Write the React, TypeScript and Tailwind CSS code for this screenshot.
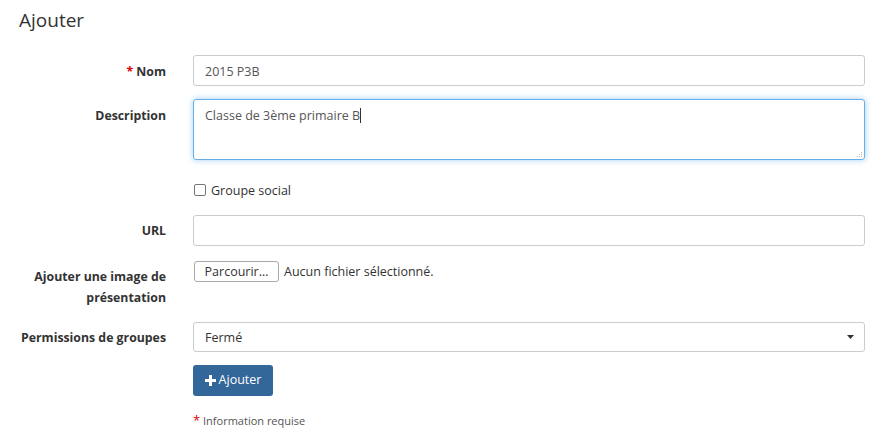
import React from "react";

const Label = ({ children, className = "" }: { children: React.ReactNode; className?: string }) => (
  <div className={`w-[147px] shrink-0 text-right font-bold text-[12.3px] text-[#333] ${className}`}>{children}</div>
);

export default function App() {
  return (
    <div className="w-[891px] h-[445px] bg-white px-[19px] text-[#333]" style={{ fontFamily: '"Open Sans", sans-serif' }}>
      <h1 className="pt-[8px] text-[19px] leading-[24px] font-normal text-[#333]">Ajouter</h1>

      <div className="mt-[23px] flex items-start">
        <Label className="pt-[8px] leading-[17px]"><span className="text-[#d00]">*</span> Nom</Label>
        <div className="ml-[27px] w-[672px] h-[31px] border border-[#ccc] rounded-[3px] px-[11px] pt-[7px] text-[12.5px] leading-[17px] text-[#555]">2015 P3B</div>
      </div>

      <div className="mt-[13px] flex items-start">
        <Label className="pt-[8px] leading-[17px]">Description</Label>
        <div className="ml-[27px] w-[672px] h-[61px] border border-[#66afe9] rounded-[3px] px-[11px] pt-[7px] text-[12.5px] leading-[17px] text-[#555] shadow-[0_0_6px_rgba(102,175,233,0.6)] relative">
          Classe de 3ème primaire B<span className="inline-block w-px h-[15px] bg-[#333] align-[-3px]"></span>
          <svg className="absolute right-[1px] bottom-[1px]" width="7" height="7" viewBox="0 0 7 7">
            <rect x="5" y="1" width="1" height="1" fill="#bbb" />
            <rect x="3" y="3" width="1" height="1" fill="#bbb" />
            <rect x="5" y="3" width="1" height="1" fill="#bbb" />
            <rect x="1" y="5" width="1" height="1" fill="#bbb" />
            <rect x="3" y="5" width="1" height="1" fill="#bbb" />
            <rect x="5" y="5" width="1" height="1" fill="#bbb" />
          </svg>
        </div>
      </div>

      <div className="mt-[20px] flex items-center">
        <div className="w-[147px] shrink-0" />
        <div className="ml-[27px] flex items-center h-[20px]">
          <span className="w-[12px] h-[12px] border border-[#767676] rounded-[2px] bg-white ml-[1px]" />
          <span className="ml-[5px] text-[12.5px] leading-[17px]">Groupe social</span>
        </div>
      </div>

      <div className="mt-[15px] flex items-start">
        <Label className="pt-[7px] leading-[17px]">URL</Label>
        <div className="ml-[27px] w-[672px] h-[31px] border border-[#ccc] rounded-[3px]" />
      </div>

      <div className="mt-[15px] flex items-start">
        <Label className="pt-[5px] leading-[21px]">Ajouter une image de présentation</Label>
        <div className="ml-[27px] flex items-center pt-[0px]">
          <div className="ml-[1px] h-[21px] w-[85px] border border-[#aaa] rounded-[3px] bg-white text-[12.5px] leading-[19px] text-center text-[#333]">Parcourir…</div>
          <span className="ml-[5px] text-[12.5px] leading-[17px]">Aucun fichier sélectionné.</span>
        </div>
      </div>

      <div className="mt-[14px] flex items-start">
        <Label className="pt-[7px] leading-[17px]">Permissions de groupes</Label>
        <div className="ml-[27px] w-[672px] h-[30px] border border-[#ccc] rounded-[3px] px-[11px] py-[6px] text-[12.5px] leading-[17px] text-[#333] flex items-center justify-between">
          <span>Fermé</span>
          <svg width="7" height="4" viewBox="0 0 7 4" className="mr-[-1px]"><polygon points="0,0 7,0 3.5,4" fill="#333" /></svg>
        </div>
      </div>

      <div className="mt-[13px] flex">
        <div className="w-[147px] shrink-0" />
        <div className="ml-[27px] h-[31px] w-[80px] rounded-[3px] bg-[#336699] text-white text-[12.5px] flex items-center justify-center gap-[3px]">
          <svg width="11" height="11" viewBox="0 0 11 11"><path d="M4 0h3v4h4v3H7v4H4V7H0V4h4z" fill="#fff" /></svg>
          <span>Ajouter</span>
        </div>
      </div>

      <div className="mt-[17px] flex">
        <div className="w-[147px] shrink-0" />
        <div className="ml-[27px] text-[11px] leading-[15px] text-[#555]"><span className="text-[#d00] text-[13px]">*</span> Information requise</div>
      </div>
    </div>
  );
}
